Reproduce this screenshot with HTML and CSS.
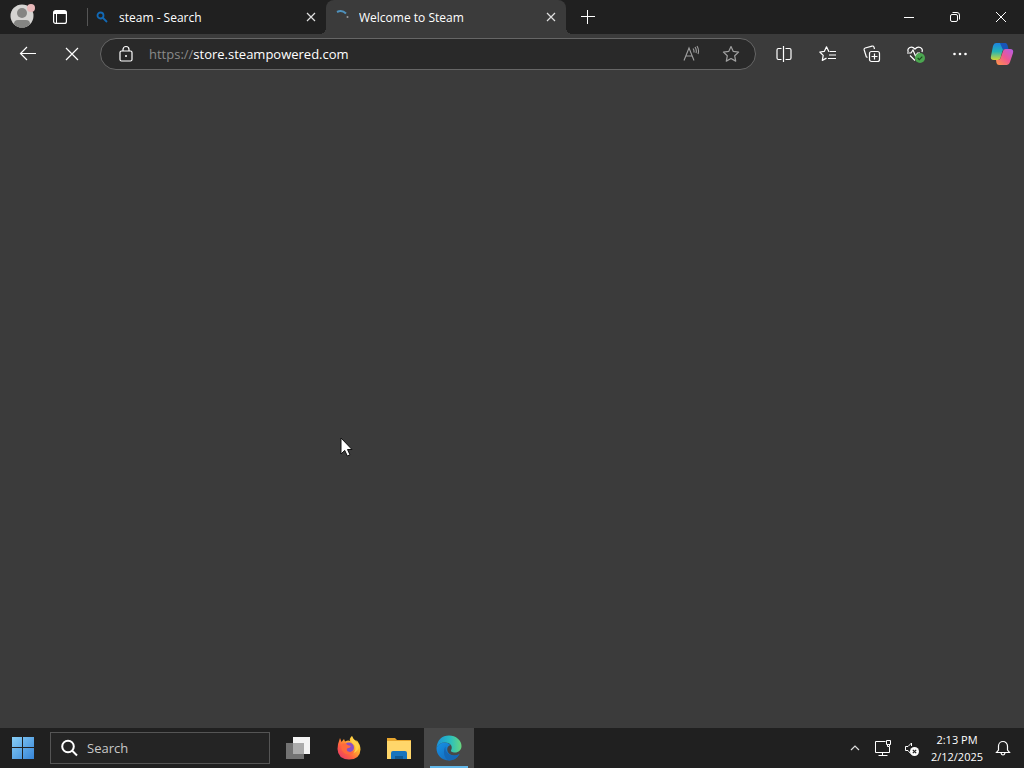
FILE: index.html
```html
<!DOCTYPE html>
<html lang="en">
<head>
    <meta charset="UTF-8">
    <meta name="viewport" content="width=device-width, initial-scale=1.0">
    <title>Welcome to Steam</title>
    <link rel="stylesheet" href="styles.css">
</head>
<body>

    <!-- Tab strip -->
    <header class="tab-strip">
        <button class="profile" aria-label="Profile">
            <svg width="26" height="26" viewBox="0 0 26 26">
                <defs><clipPath id="face"><circle cx="13" cy="14" r="11.5"/></clipPath></defs>
                <g clip-path="url(#face)">
                    <rect width="26" height="26" fill="#d5d4d2"/>
                    <circle cx="13" cy="11" r="5" fill="#858583"/>
                    <path d="M5 26v-4q0-4 4-4h8q4 0 4 4v4z" fill="#858583"/>
                </g>
                <circle cx="22" cy="6" r="4" fill="#e9b9ba"/>
            </svg>
        </button>
        <button class="workspaces" aria-label="Tab actions">
            <svg width="16" height="16" viewBox="0 0 16 16" fill="none" stroke="#fff">
                <rect x="1.6" y="1.6" width="12.8" height="12.8" rx="2" stroke-width="1.2"/>
                <path d="M2 3.5h12" stroke-width="3"/>
                <path d="M4.5 4v10"/>
            </svg>
        </button>
        <div class="tab">
            <svg class="favicon" width="16" height="16" viewBox="0 0 16 16" fill="none" stroke="#1269b5" stroke-width="1.8">
                <circle cx="6.5" cy="6.5" r="3"/>
                <path d="M9 9l4 4"/>
            </svg>
            <span class="tab-title">steam - Search</span>
            <button class="tab-close" aria-label="Close tab">
                <svg width="10" height="10" viewBox="0 0 10 10" stroke="#e0e0e0" stroke-width="1.2"><path d="M1 1l8 8M9 1l-8 8"/></svg>
            </button>
        </div>
        <div class="tab active">
            <svg class="favicon" width="16" height="16" viewBox="0 0 16 16" fill="none">
                <path d="M3 3q5-2.500 9 1.500" stroke="#4f92bd" stroke-width="2"/>
                <circle cx="13.500" cy="8" r="1" fill="#9a9a9a"/>
            </svg>
            <span class="tab-title">Welcome to Steam</span>
            <button class="tab-close" aria-label="Close tab">
                <svg width="10" height="10" viewBox="0 0 10 10" stroke="#e0e0e0" stroke-width="1.2"><path d="M1 1l8 8M9 1l-8 8"/></svg>
            </button>
        </div>
        <button class="new-tab" aria-label="New tab">
            <svg width="14" height="14" viewBox="0 0 14 14" stroke="#fff"><path d="M6.500 0v14M0 6.500h14"/></svg>
        </button>
        <div class="window-controls">
            <button aria-label="Minimize">
                <svg width="12" height="12" viewBox="0 0 12 12" stroke="#fff"><path d="M1 6.500h10"/></svg>
            </button>
            <button aria-label="Restore">
                <svg width="12" height="12" viewBox="0 0 12 12" fill="none" stroke="#fff">
                    <rect x="1.500" y="3.500" width="7" height="7" rx="1.500"/>
                    <path d="M3.500 1.500H8a2.500 2.500 0 0 1 2.500 2.500v4.500"/>
                </svg>
            </button>
            <button aria-label="Close">
                <svg width="12" height="12" viewBox="0 0 12 12" stroke="#fff"><path d="M1 1l10 10M11 1L1 11"/></svg>
            </button>
        </div>
    </header>

    <!-- Toolbar -->
    <nav class="toolbar">
        <button aria-label="Back">
            <svg width="18" height="18" viewBox="0 0 18 18" fill="none" stroke="#fff" stroke-width="1.200"><path d="M17 8.500H1.500M8 2L1.500 8.500 8 15"/></svg>
        </button>
        <button aria-label="Stop">
            <svg width="14" height="14" viewBox="0 0 14 14" stroke="#fff" stroke-width="1.200"><path d="M1 1l12 12M13 1L1 13"/></svg>
        </button>
        <form class="address-bar" onsubmit="return false">
            <svg width="18" height="18" viewBox="0 0 18 18" fill="none" stroke="#fff" stroke-width="1.200">
                <rect x="3" y="6" width="12" height="10" rx="1.500"/>
                <path d="M6 6V4.500a3 3 0 0 1 6 0V6"/>
                <circle cx="9" cy="11" r="1" fill="#fff" stroke="none"/>
            </svg>
            <a class="url" href="#"><span class="scheme">https://</span>store.steampowered.com</a>
            <button type="button" aria-label="Read aloud">
                <svg width="18" height="18" viewBox="0 0 18 18" fill="none" stroke="#a0a0a0" stroke-width="1.100">
                    <path d="M2 15.500L7 3l5 12.500M3.800 11h6.400"/>
                    <path d="M11 3.500q1.500 2 .8 4M13 2q2 3 1 6M15 1q2.500 4 1 8"/>
                </svg>
            </button>
            <button type="button" aria-label="Add to favorites">
                <svg width="18" height="18" viewBox="0 0 18 18" fill="none" stroke="#a0a0a0" stroke-width="1.200" stroke-linejoin="round">
                    <path d="M9 1.500l2.300 4.900 5.300.7-3.900 3.700 1 5.300L9 13.500l-4.700 2.600 1-5.300-3.900-3.700 5.300-.7z"/>
                </svg>
            </button>
        </form>
        <button aria-label="Split screen">
            <svg width="18" height="18" viewBox="0 0 18 18" fill="none" stroke="#fff" stroke-width="1.200">
                <path d="M6.500 3.500H3.500Q2 3.500 2 5v8q0 1.500 1.500 1.500h3M10.500 3.500h4Q16 3.500 16 5v8q0 1.500-1.500 1.500h-4M8.500 1v16"/>
            </svg>
        </button>
        <button aria-label="Favorites">
            <svg width="18" height="18" viewBox="0 0 18 18" fill="none" stroke="#fff" stroke-width="1.200" stroke-linejoin="round">
                <path d="M10.500 6.500H9.800L7.500 1.800 5.400 6.300.8 7l3.400 3.400-.9 5 4.200-2.300M11 6.500h6M10 10h7M9 13.500h8"/>
            </svg>
        </button>
        <button aria-label="Collections">
            <svg width="18" height="18" viewBox="0 0 18 18" fill="none" stroke="#fff" stroke-width="1.200">
                <path d="M4.500 12.500l-1.200-.7L1.200 5q-.4-1.500 1-2L9 1.100q1.500-.4 2 1l.5 1.900"/>
                <rect x="6.500" y="6.500" width="10" height="10" rx="2"/>
                <path d="M11.500 8.500v6M8.500 11.500h6"/>
            </svg>
        </button>
        <button aria-label="Browser essentials">
            <svg width="20" height="18" viewBox="0 0 20 18" fill="none" stroke="#fff" stroke-width="1.200">
                <path d="M2.200 7C.8 3 5.500.2 9 4c3.500-3.800 8.400-1 7 3M4 10.500l5 5M1 8h4l2-3 2.500 6L11.500 8H14"/>
                <circle cx="14" cy="13" r="5" fill="#4ba650" stroke="none"/>
                <path d="M11.700 13l1.600 1.600 3-3" stroke="#1c4a1f"/>
            </svg>
        </button>
        <button aria-label="Settings and more">
            <svg width="16" height="16" viewBox="0 0 16 16" fill="#fff">
                <circle cx="2.500" cy="8" r="1.300"/><circle cx="8" cy="8" r="1.300"/><circle cx="13.500" cy="8" r="1.300"/>
            </svg>
        </button>
        <button class="copilot" aria-label="Copilot">
            <svg width="24" height="22" viewBox="0 0 24 22">
                <defs>
                    <linearGradient id="cool" x1="0" y1="0" x2="0" y2="1">
                        <stop offset="0" stop-color="#1c83df"/><stop offset=".5" stop-color="#23b3b5"/><stop offset="1" stop-color="#d5d534"/>
                    </linearGradient>
                    <linearGradient id="warm" x1="0" y1="1" x2="1" y2="0">
                        <stop offset="0" stop-color="#ff9a42"/><stop offset=".5" stop-color="#ef5791"/><stop offset="1" stop-color="#b35dea"/>
                    </linearGradient>
                </defs>
                <path d="M6 0h8q2 0 2.500 2l1 4H15q-2 0-2.600 2L10.500 15q-.6 2-2.500 2H4q-4 0-3-4L3 3q.8-3 3-3z" fill="url(#cool)"/>
                <path d="M10 0h5q2 0 2.500 2l1 4H15q-1.500 0-2 1z" fill="#1855b9"/>
                <path d="M17 22H9q-2 0-2.500-2L6 17h2q2 0 2.600-2L13 8q.6-2 2.500-2H20q4 0 3 4l-3 9q-.8 3-3 3z" fill="url(#warm)"/>
            </svg>
        </button>
    </nav>

    <!-- Page is still loading -->
    <main class="page"></main>

    <!-- Taskbar -->
    <footer class="taskbar">
        <button class="start" aria-label="Start">
            <svg width="22" height="22" viewBox="0 0 22 22">
                <defs>
                    <linearGradient id="win" x1="0" y1="0" x2="1" y2="1">
                        <stop offset="0" stop-color="#88cef6"/><stop offset="1" stop-color="#3684d7"/>
                    </linearGradient>
                </defs>
                <path d="M0 0h10v10H0zM11 0h11v10H11zM0 11h10v11H0zM11 11h11v11H11z" fill="url(#win)"/>
            </svg>
        </button>
        <label class="search">
            <svg width="18" height="18" viewBox="0 0 18 18" fill="none" stroke="#fff" stroke-width="2">
                <circle cx="7" cy="7.500" r="5.800"/>
                <path d="M11 11.500l5 5"/>
            </svg>
            <input type="text" placeholder="Search" aria-label="Search">
        </label>
        <div class="apps">
            <button aria-label="Task view">
                <svg width="26" height="24" viewBox="0 0 26 24">
                    <rect x="7" y="1" width="17" height="17" fill="#f3f3f3"/>
                    <rect x="0" y="7" width="18" height="16" fill="#737373"/>
                    <rect x="7" y="7" width="11" height="11" fill="#ababab"/>
                </svg>
            </button>
            <button aria-label="Firefox">
                <svg width="24" height="24" viewBox="0 0 24 24">
                    <defs>
                        <linearGradient id="fox" x1="1" y1="0" x2="0" y2="1">
                            <stop offset="0" stop-color="#fff04b"/><stop offset=".35" stop-color="#ffb52d"/><stop offset=".65" stop-color="#ff6140"/><stop offset="1" stop-color="#e32d77"/>
                        </linearGradient>
                    </defs>
                    <path d="M3 2l1.500 4L7 3l1 2.500Q11 4 13 5q-1-2.500 2-5 1 3 4 5l.5 1V4q4 4.500 4 9.500Q23 23.500 12 23.500.8 23 .5 13q0-5 2.500-11z" fill="url(#fox)"/>
                    <circle cx="12" cy="11.500" r="5" fill="#8a4fc4"/>
                    <path d="M4.500 8q4-2 6 1l3.500 1q-1 2-4 2.500-1 3 3 3.500 3 0 4.500-2-1 4.500-5.500 4.500Q6 18 4.500 13z" fill="#ff6a3d"/>
                    <path d="M15 0q-3 5 2.500 9 2.500 4-1 8 5.500-2 5.500-8l-3-4Q15 3 15 0z" fill="#ffd04a"/>
                </svg>
            </button>
            <button aria-label="File Explorer">
                <svg width="26" height="24" viewBox="0 0 26 24">
                    <path d="M1 2h8l2 2h14v18H1z" fill="#e8a62e"/>
                    <path d="M1 5h24v18H1z" fill="#ffd66a"/>
                    <path d="M5 23v-6q0-2 2-2h12q2 0 2 2v6z" fill="#1774bd"/>
                    <path d="M9 20h8v3H9z" fill="#105992"/>
                </svg>
            </button>
            <button class="running" aria-label="Microsoft Edge">
                <svg width="26" height="26" viewBox="0 0 26 26">
                    <defs>
                        <linearGradient id="wave" x1="0" y1="0" x2="1" y2="0">
                            <stop offset="0" stop-color="#1b91d8"/><stop offset=".55" stop-color="#29bfbf"/><stop offset="1" stop-color="#68d67e"/>
                        </linearGradient>
                        <linearGradient id="tail" x1="0" y1="0" x2="1" y2="1">
                            <stop offset="0" stop-color="#1692e5"/><stop offset="1" stop-color="#1460b1"/>
                        </linearGradient>
                    </defs>
                    <path d="M.5 13C1 5 6 .5 13 .5c7 0 12.500 5 12.500 10.500 0 4-3 6.500-6.500 6.500-3 0-5-1.200-3.600-3C17 11 14 7.500 9 7.500q-6 0-8.500 5.500z" fill="url(#wave)"/>
                    <path d="M.5 13Q3 7.500 9 7.500q3.500 0 5.500 2.500C10 11 10 18 15.500 20q4.500 1.300 8-1Q20 25.500 13 25.500C6 25.500.3 20 .5 13z" fill="url(#tail)"/>
                    <path d="M9.500 11.500C9 17 13 21 18 20.600q3 0 5.500-1.600Q20 25.500 13 25.500C8 24 6.500 16 9.500 11.500z" fill="#1567b5"/>
                </svg>
            </button>
        </div>
        <div class="tray">
            <button aria-label="Show hidden icons">
                <svg width="10" height="10" viewBox="0 0 10 10" fill="none" stroke="#ddd" stroke-width="1.200"><path d="M1 7l4-4 4 4"/></svg>
            </button>
            <button aria-label="Network">
                <svg width="18" height="18" viewBox="0 0 18 18" fill="none" stroke="#fff">
                    <path d="M11.500 2.500h-10v11h14V8M8.500 13.500v3M4.500 16.500h9M12.500 1.500h4v4h-4zM13.500 5.500v2h2v-2"/>
                </svg>
            </button>
            <button aria-label="Volume muted">
                <svg width="16" height="16" viewBox="0 0 16 16" fill="none" stroke="#fff">
                    <path d="M7.500 13.500L5 10.500H2.500v-4H5L8.500 3v3"/>
                    <circle cx="11.500" cy="11.500" r="4.500" fill="#fff" stroke="none"/>
                    <path d="M9.800 9.800l3.400 3.400M13.200 9.800l-3.400 3.400" stroke="#222" stroke-width="1.200"/>
                </svg>
            </button>
            <div class="clock">
                <span>2:13 PM</span>
                <span>2/12/2025</span>
            </div>
            <button class="bell" aria-label="Notifications">
                <svg width="16" height="16" viewBox="0 0 16 16" fill="none" stroke="#fff" stroke-width="1.200">
                    <path d="M1.500 12.500h13L12.500 10V6a4.500 4.500 0 0 0-9 0v4zM6 13q.5 2 2 2t2-2"/>
                </svg>
            </button>
        </div>
    </footer>

    <!-- Mouse pointer -->
    <svg class="pointer" width="14" height="20" viewBox="0 0 14 20">
        <path d="M1 1v16l3.700-3.600L7.300 19l2.700-1.200-2.500-5.300H12z" fill="#fff" stroke="#111"/>
    </svg>

</body>
</html>
```

FILE: styles.css
```css
* {
    box-sizing: border-box;
}
body {
    font-family: "Open Sans", "Noto Sans", sans-serif;
    font-size: 12px;
    color: white;
    background-color: #3b3b3b;
    margin: 0;
    min-height: 100vh;
    display: flex;
    flex-direction: column;
}
button {
    display: flex;
    align-items: center;
    justify-content: center;
    flex-shrink: 0;
    background: none;
    border: none;
    padding: 0;
    cursor: pointer;
}
svg {
    display: block;
    flex-shrink: 0;
}

/* Tab strip */
.tab-strip {
    display: flex;
    height: 34px;
    background-color: #202020;
}
.profile {
    width: 44px;
    padding-bottom: 4px;
}
.workspaces {
    width: 32px;
}
.tab {
    position: relative;
    display: flex;
    align-items: center;
    flex: 0 1 240px;
    min-width: 0;
    padding: 0 10px 0 8px;
}
.tab:not(.active) {
    margin-left: 10px;
}
.tab:not(.active)::before {
    content: "";
    position: absolute;
    left: 1px;
    top: 8px;
    width: 1px;
    height: 18px;
    background-color: #555;
}
.tab.active {
    background-color: #3b3b3b;
    border-radius: 8px 8px 0 0;
}
/* curved feet of the active tab */
.tab.active::before,
.tab.active::after {
    content: "";
    position: absolute;
    bottom: 0;
    width: 6px;
    height: 6px;
}
.tab.active::before {
    right: 100%;
    background: radial-gradient(circle at 0 0, transparent 6px, #3b3b3b 6px);
}
.tab.active::after {
    left: 100%;
    background: radial-gradient(circle at 100% 0, transparent 6px, #3b3b3b 6px);
}
.tab-title {
    flex: 1;
    margin-left: 9px;
    white-space: nowrap;
    overflow: hidden;
}
.tab-close {
    width: 10px;
    height: 20px;
}
.new-tab {
    width: 44px;
}
.window-controls {
    display: flex;
    margin-left: auto;
}
.window-controls button {
    width: 46px;
}

/* Toolbar */
.toolbar {
    display: flex;
    align-items: center;
    height: 40px;
    padding: 0 2px 0 6px;
}
.toolbar button {
    width: 44px;
    height: 32px;
}
.address-bar {
    display: flex;
    align-items: center;
    flex: 1;
    height: 32px;
    margin: 0 6px;
    padding: 0 4px 0 16px;
    background-color: #292929;
    border: 1px solid #666;
    border-radius: 16px;
}
.address-bar button {
    width: 40px;
}
.url {
    flex: 1;
    margin-left: 14px;
    font-size: 13px;
    color: white;
    text-decoration: none;
}
.scheme {
    color: #8a8a8a;
}
.toolbar .copilot {
    width: 40px;
}

.page {
    flex: 1;
}

/* Taskbar */
.taskbar {
    display: flex;
    align-items: center;
    height: 40px;
    background-color: #202020;
}
.start {
    width: 46px;
    height: 40px;
}
.search {
    display: flex;
    align-items: center;
    width: 220px;
    height: 32px;
    margin: 0 4px;
    padding: 0 10px;
    background-color: #242424;
    border: 1px solid #555;
}
.search input {
    flex: 1;
    min-width: 0;
    margin-left: 8px;
    padding: 0;
    background: none;
    border: none;
    outline: none;
    font-family: inherit;
    font-size: 13px;
    color: white;
}
.search input::placeholder {
    color: #c8c8c8;
}
.apps {
    display: flex;
}
.apps button {
    width: 50px;
    height: 40px;
}
.apps .running {
    position: relative;
    background-color: #484848;
}
.apps .running::after {
    content: "";
    position: absolute;
    left: 6px;
    right: 6px;
    bottom: 0;
    height: 2px;
    background-color: #62b8ea;
}
.tray {
    display: flex;
    align-items: center;
    margin-left: auto;
}
.tray button {
    width: 28px;
    height: 40px;
}
.clock {
    display: flex;
    flex-direction: column;
    align-items: center;
    width: 64px;
    font-size: 11px;
    line-height: 17px;
}
.tray .bell {
    margin-right: 7px;
}

.pointer {
    position: absolute;
    left: 340px;
    top: 437px;
}
```
